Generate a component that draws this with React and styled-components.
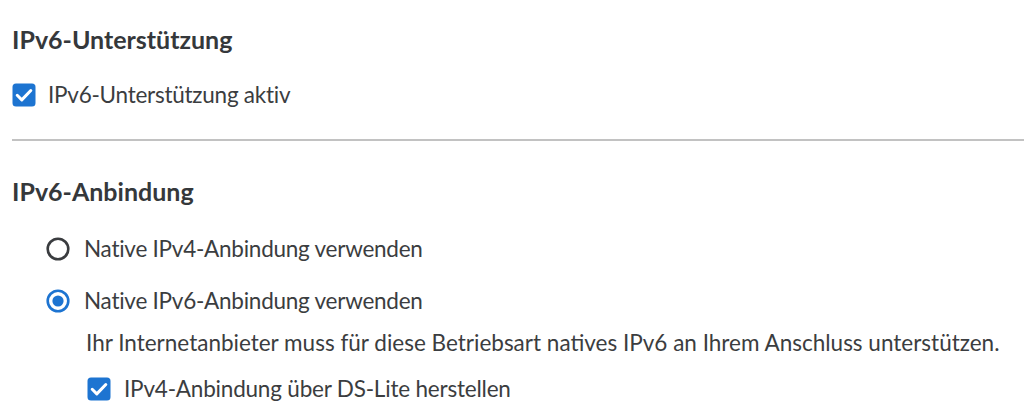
import React from "react";
import styled, { createGlobalStyle } from "styled-components";

const GlobalStyle = createGlobalStyle`
  html, body { margin: 0; padding: 0; background: #ffffff; }
  body { font-family: Lato, "Open Sans", sans-serif; color: #3b3d40; }
`;

const Page = styled.div`
  display: flex;
  flex-direction: column;
  padding: 23px 0 0 12px;
  width: 100%;
  box-sizing: border-box;
`;

const Section = styled.section`
  display: flex;
  flex-direction: column;
`;

const Heading = styled.h2`
  margin: ${(p) => p.$top || 0}px 0 0 0;
  height: 32px;
  line-height: 32px;
  font-size: 25px;
  font-weight: 700;
  color: #35383b;
  white-space: nowrap;
`;

const OptionRow = styled.label`
  display: flex;
  align-items: center;
  height: 32px;
  margin-top: ${(p) => p.$top}px;
  margin-left: ${(p) => p.$indent || 0}px;
  gap: ${(p) => p.$gap}px;
  font-size: 22.5px;
  letter-spacing: ${(p) => p.$tracking ?? -0.25}px;
  line-height: 32px;
  white-space: nowrap;
  cursor: pointer;
`;

const Description = styled.p`
  margin: ${(p) => p.$top}px 0 0 74px;
  height: 32px;
  line-height: 32px;
  font-size: 22.5px;
  white-space: nowrap;
  color: #3b3d40;
`;

const Divider = styled.hr`
  border: 0;
  height: 2px;
  margin: 28px 0 0 0;
  background: #c2c2c2;
`;

const BoxIcon = styled.svg`
  flex: none;
  width: 24px;
  height: 24px;
  display: block;
`;

function Checkbox() {
  return (
    <BoxIcon viewBox="0 0 24 24">
      <rect x="0.5" y="0.5" width="23" height="23" rx="3.5" fill="#1d74d1" />
      <path d="M5.2 12.3 L9.8 16.9 L18.8 7.5" fill="none" stroke="#ffffff" strokeWidth="3" strokeLinecap="round" strokeLinejoin="round" />
    </BoxIcon>
  );
}

function Radio({ checked }) {
  return (
    <BoxIcon viewBox="0 0 24 24">
      {checked ? (
        <>
          <circle cx="12" cy="12" r="10.3" fill="none" stroke="#1d74d1" strokeWidth="2.6" />
          <circle cx="12" cy="12" r="5.6" fill="#1d74d1" />
        </>
      ) : (
        <circle cx="12" cy="12" r="10.3" fill="none" stroke="#3a3c3f" strokeWidth="2.6" />
      )}
    </BoxIcon>
  );
}

export default function App() {
  return (
    <>
      <GlobalStyle />
      <Page>
        <Section>
          <Heading>IPv6-Unterstützung</Heading>
          <OptionRow $top={24} $gap={12}>
            <Checkbox />
            <span>IPv6-Unterstützung aktiv</span>
          </OptionRow>
        </Section>
        <Divider />
        <Section>
          <Heading $top={34}>IPv6-Anbindung</Heading>
          <OptionRow $top={26} $indent={34} $gap={14}>
            <Radio />
            <span>Native IPv4-Anbindung verwenden</span>
          </OptionRow>
          <OptionRow $top={20} $indent={34} $gap={14}>
            <Radio checked />
            <span>Native IPv6-Anbindung verwenden</span>
          </OptionRow>
          <Description $top={10}>
            Ihr Internetanbieter muss für diese Betriebsart natives IPv6 an Ihrem Anschluss unterstützen.
          </Description>
          <OptionRow $top={14} $indent={75} $gap={13} $tracking={-0.2}>
            <Checkbox />
            <span>IPv4-Anbindung über DS-Lite herstellen</span>
          </OptionRow>
        </Section>
      </Page>
    </>
  );
}
